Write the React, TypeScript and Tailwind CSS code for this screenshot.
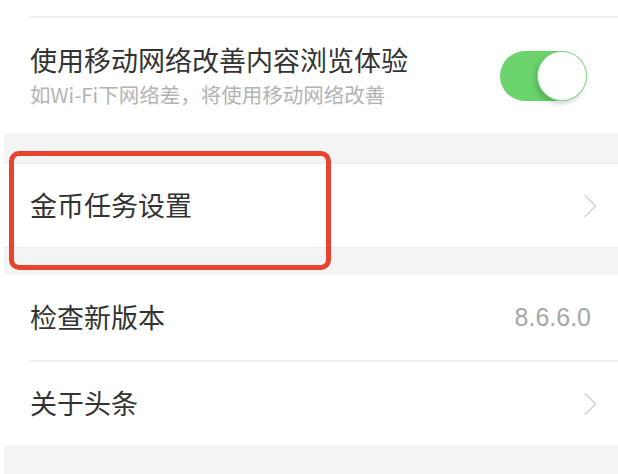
import React from "react";

const font = { fontFamily: '"Noto Sans CJK SC", "Noto Sans", sans-serif' };

function Chevron() {
  return (
    <svg width="14" height="24" viewBox="0 0 14 24" fill="none">
      <polyline points="2,1.5 12.5,12 2,22.5" stroke="#d4d4d4" strokeWidth="1.6" strokeLinecap="round" strokeLinejoin="round" />
    </svg>
  );
}

function Toggle() {
  return (
    <div className="relative h-[50px] w-[87px] rounded-full bg-[#6ad36c] flex items-center justify-end">
      <div className="h-[50px] w-[50px] rounded-full bg-white border border-[#8fdc90] shadow-[-2px_3px_5px_rgba(0,0,0,0.18)]" />
    </div>
  );
}

export default function App() {
  return (
    <div className="relative w-[618px] h-[474px] bg-white pl-[4px] overflow-hidden" style={font}>
      <div className="flex flex-col h-full bg-[#f4f4f4]">
        {/* top section */}
        <div className="bg-white">
          <div className="h-[16px]" />
          <div className="ml-[26px] h-[2px] bg-[#efefef]" />
          <div className="flex items-center justify-between h-[115px] pl-[26px] pr-[31px]">
            <div className="flex flex-col">
              <div className="text-[27px] leading-[36px] text-[#333333]">使用移动网络改善内容浏览体验</div>
              <div className="text-[20.5px] leading-[32px] text-[#b3b3b3]">如Wi-Fi下网络差，将使用移动网络改善</div>
            </div>
            <Toggle />
          </div>
        </div>

        <div className="h-[30px]" />

        <div className="bg-white border-t border-[#ececec] flex items-center justify-between h-[84px] pl-[26px] pr-[21px]">
          <div className="text-[27px] text-[#333333]">金币任务设置</div>
          <Chevron />
        </div>

        <div className="h-[28px] border-t border-[#ececec]" />

        <div className="bg-white">
          <div className="flex items-center justify-between h-[85px] pl-[26px] pr-[27px]">
            <div className="text-[27px] text-[#333333]">检查新版本</div>
            <div className="text-[25px] text-[#a6a6a6]" style={{ fontFamily: '"Liberation Sans", Arial, sans-serif' }}>8.6.6.0</div>
          </div>
          <div className="ml-[26px] h-[2px] bg-[#efefef]" />
          <div className="flex items-center justify-between h-[83px] pl-[26px] pr-[21px]">
            <div className="text-[27px] text-[#333333]">关于头条</div>
            <Chevron />
          </div>
        </div>

        <div className="flex-1" />
      </div>

      {/* red annotation box */}
      <div className="absolute left-[9px] top-[151px] w-[322px] h-[119px] rounded-[10px] border-[5px] border-[#e9432d]" />
    </div>
  );
}
